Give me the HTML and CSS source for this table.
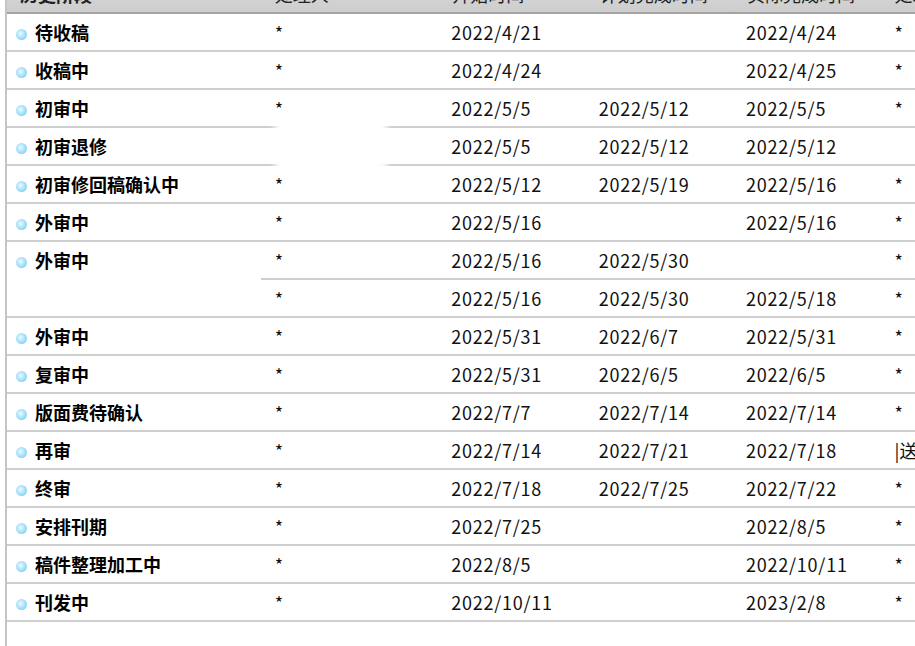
FILE: index.html
```html
<!DOCTYPE html>
<html lang="zh-CN">
<head>
<meta charset="utf-8">
<link rel="stylesheet" href="styles.css">
<title>历史阶段</title>
</head>
<body>
<div class="wrap">
  <table class="grid">
    <colgroup>
      <col class="c-stage"><col class="c-who"><col class="c-d"><col class="c-d"><col class="c-d"><col class="c-d">
    </colgroup>
    <thead>
      <tr>
        <th class="stage-h">历史阶段</th>
        <th>处理人</th>
        <th>开始时间</th>
        <th>计划完成时间</th>
        <th>实际完成时间</th>
        <th>处理意见</th>
      </tr>
    </thead>
    <tbody>
      <tr><td class="stage"><span class="dot"></span>待收稿</td><td>*</td><td class="date">2022/4/21</td><td></td><td class="date">2022/4/24</td><td>*</td></tr>
      <tr><td class="stage"><span class="dot"></span>收稿中</td><td>*</td><td class="date">2022/4/24</td><td></td><td class="date">2022/4/25</td><td>*</td></tr>
      <tr><td class="stage"><span class="dot"></span>初审中</td><td>*</td><td class="date">2022/5/5</td><td class="date">2022/5/12</td><td class="date">2022/5/5</td><td>*</td></tr>
      <tr><td class="stage"><span class="dot"></span>初审退修</td><td></td><td class="date">2022/5/5</td><td class="date">2022/5/12</td><td class="date">2022/5/12</td><td></td></tr>
      <tr><td class="stage"><span class="dot"></span>初审修回稿确认中</td><td>*</td><td class="date">2022/5/12</td><td class="date">2022/5/19</td><td class="date">2022/5/16</td><td>*</td></tr>
      <tr><td class="stage"><span class="dot"></span>外审中</td><td>*</td><td class="date">2022/5/16</td><td></td><td class="date">2022/5/16</td><td>*</td></tr>
      <tr><td class="stage top" rowspan="2"><span class="dot"></span>外审中</td><td>*</td><td class="date">2022/5/16</td><td class="date">2022/5/30</td><td></td><td>*</td></tr>
      <tr><td>*</td><td class="date">2022/5/16</td><td class="date">2022/5/30</td><td class="date">2022/5/18</td><td>*</td></tr>
      <tr><td class="stage"><span class="dot"></span>外审中</td><td>*</td><td class="date">2022/5/31</td><td class="date">2022/6/7</td><td class="date">2022/5/31</td><td>*</td></tr>
      <tr><td class="stage"><span class="dot"></span>复审中</td><td>*</td><td class="date">2022/5/31</td><td class="date">2022/6/5</td><td class="date">2022/6/5</td><td>*</td></tr>
      <tr><td class="stage"><span class="dot"></span>版面费待确认</td><td>*</td><td class="date">2022/7/7</td><td class="date">2022/7/14</td><td class="date">2022/7/14</td><td>*</td></tr>
      <tr><td class="stage"><span class="dot"></span>再审</td><td>*</td><td class="date">2022/7/14</td><td class="date">2022/7/21</td><td class="date">2022/7/18</td><td class="note">|送</td></tr>
      <tr><td class="stage"><span class="dot"></span>终审</td><td>*</td><td class="date">2022/7/18</td><td class="date">2022/7/25</td><td class="date">2022/7/22</td><td>*</td></tr>
      <tr><td class="stage"><span class="dot"></span>安排刊期</td><td>*</td><td class="date">2022/7/25</td><td></td><td class="date">2022/8/5</td><td>*</td></tr>
      <tr><td class="stage"><span class="dot"></span>稿件整理加工中</td><td>*</td><td class="date">2022/8/5</td><td></td><td class="date">2022/10/11</td><td>*</td></tr>
      <tr><td class="stage"><span class="dot"></span>刊发中</td><td>*</td><td class="date">2022/10/11</td><td></td><td class="date">2023/2/8</td><td>*</td></tr>
    </tbody>
  </table>
  <div class="redact"></div>
</div>
</body>
</html>
```
FILE: styles.css
```css
html, body {
  margin: 0;
  padding: 0;
  background: #ffffff;
  overflow: hidden;
  height: 646px;
}
body {
  font-family: "Noto Sans CJK SC", "Noto Sans", sans-serif;
  color: #111;
}
.wrap {
  position: relative;
  margin-left: 5px;
  margin-top: -25px;
  border-left: 2px solid #c4c4c4;
  min-height: 700px;
  width: 1100px;
}
.grid {
  border-collapse: collapse;
  table-layout: fixed;
  width: 1021px;
}
.c-stage { width: 253px; }
.c-who { width: 177px; }
.c-d { width: 147px; }

th, td {
  height: 36px;
  padding: 0 0 0 14px;
  text-align: left;
  vertical-align: middle;
  font-size: 18px;
  font-weight: 400;
  white-space: nowrap;
  overflow: hidden;
  line-height: 36px;
}
th {
  height: 37px;
  background: linear-gradient(#dedede, #cdcdcd);
  border-bottom: 2px solid #a3a3a3;
  color: #222;
}
th.stage-h {
  padding-left: 13px;
  font-weight: 700;
}
td {
  border-bottom: 2px solid #cfcfcf;
}
td.date {
  letter-spacing: 0.75px;
  padding-left: 13px;
}
td.stage {
  padding-left: 9px;
  font-weight: 700;
  color: #000;
}
td.stage.top {
  vertical-align: top;
}
.dot {
  display: inline-block;
  width: 11px;
  height: 11px;
  border-radius: 50%;
  background: radial-gradient(circle at 42% 42%, #eefaff 0%, #b3e5fb 40%, #5fc3ee 100%);
  margin-right: 8px;
  vertical-align: 0;
}
.redact {
  position: absolute;
  left: 268px;
  top: 144px;
  width: 112px;
  height: 52px;
  background: #fff;
  filter: blur(3px);
}
```
